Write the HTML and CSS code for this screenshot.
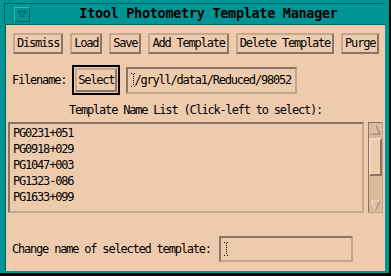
FILE: index.html
```html
<!DOCTYPE html>
<html>
<head>
<link rel="stylesheet" href="styles.css">
</head>
<body>

<div class="window">

<div class="titlebar">
  <div class="menu-btn">
    <svg width="10" height="8" viewBox="0 0 10 8"><path d="M1 1.5 H9 L5 7 Z" fill="none" stroke="#005a5a" stroke-width="1"/></svg>
  </div>
  <div class="title">Itool Photometry Template Manager</div>
</div>

<div class="client">

  <div class="toolbar">
    <div class="btn">Dismiss</div>
    <div class="btn">Load</div>
    <div class="btn">Save</div>
    <div class="btn">Add Template</div>
    <div class="btn">Delete Template</div>
    <div class="btn">Purge</div>
  </div>

  <div class="file-row">
    <span class="label">Filename:</span>
    <div class="default-ring"><div class="btn btn-tall">Select</div></div>
    <div class="field field-file"><svg class="ibeam" width="5" height="14" viewBox="0 0 5 14"><path d="M0 0.5 H2 M3 0.5 H5 M2.5 1 V13 M0 13.5 H2 M3 13.5 H5" stroke="#000" stroke-width="1" stroke-dasharray="1 1"/></svg><span>/gryll/data1/Reduced/98052</span></div>
  </div>

  <div class="list-label">Template Name List (Click-left to select):</div>

  <div class="list-row">
    <div class="list">
      <div class="item">PG0231+051</div>
      <div class="item">PG0918+029</div>
      <div class="item">PG1047+003</div>
      <div class="item">PG1323-086</div>
      <div class="item">PG1633+099</div>
    </div>
    <div class="scrollbar">
      <div class="arrow">
        <svg width="11" height="11" viewBox="0 0 11 11"><path d="M5.5 1 L10 10 H1 Z" fill="#e2bfa1" stroke="#8b7562"/><path d="M5.5 1 L1 10" fill="none" stroke="#f6dcc5"/></svg>
      </div>
      <div class="thumb"></div>
      <div class="track"></div>
      <div class="arrow">
        <svg width="11" height="11" viewBox="0 0 11 11"><path d="M5.5 10 L10 1 H1 Z" fill="#e2bfa1" stroke="#f6dcc5"/><path d="M10 1 L5.5 10" fill="none" stroke="#8b7562"/></svg>
      </div>
    </div>
  </div>

  <div class="rename-row">
    <span class="label">Change name of selected template:</span>
    <div class="field field-rename"><svg class="ibeam" width="5" height="14" viewBox="0 0 5 14"><path d="M0 0.5 H2 M3 0.5 H5 M2.5 1 V13 M0 13.5 H2 M3 13.5 H5" stroke="#000" stroke-width="1" stroke-dasharray="1 1"/></svg></div>
  </div>

</div>

</div>

</body>
</html>
```

FILE: styles.css
```css
body {
  margin: 0;
  background: #000000;
}

/* window frame */
.window {
  width: 389px;
  height: 273px;
  box-sizing: border-box;
  background: #009595;
  padding: 3px 4px 2px 4px;
  display: flex;
  flex-direction: column;
  font-family: "DejaVu Sans Mono", "Liberation Mono", monospace;
  font-size: 12px;
  letter-spacing: -1.2px;
  color: #000000;
}

.titlebar {
  height: 20px;
  border-top: 1px solid #005f5f;
  border-left: 1px solid #005f5f;
  display: flex;
  align-items: center;
  padding-left: 9px;
}

.menu-btn {
  width: 16px;
  height: 15px;
  box-sizing: border-box;
  border-top: 1px solid #3cb4b4;
  border-left: 1px solid #3cb4b4;
  border-right: 1px solid #005f5f;
  border-bottom: 1px solid #005f5f;
  display: flex;
  align-items: center;
  justify-content: center;
}

.title {
  flex: 1;
  text-align: center;
  font-weight: bold;
  font-size: 13.5px;
  letter-spacing: -0.3px;
  padding-left: 2px;
  line-height: 16px;
  margin-top: -2px;
}

.client {
  flex: 1;
  margin-left: 1px;
  background: #eecbad;
  border-top: 1px solid #005f5f;
  border-left: 1px solid #005f5f;
  display: flex;
  flex-direction: column;
}

/* buttons */
.toolbar {
  display: flex;
  gap: 7px;
  margin-top: 8px;
  padding-left: 7px;
}

.btn {
  height: 21px;
  box-sizing: border-box;
  line-height: 17px;
  padding: 0 2px 0 2px;
  border: 2px solid;
  border-color: #c6a78d #8b7562 #8b7562 #c6a78d;
  white-space: nowrap;
}

.file-row {
  display: flex;
  align-items: center;
  margin-top: 11px;
  padding-left: 6px;
}

.label {
  white-space: nowrap;
}

.default-ring {
  margin-left: 6px;
  border: 2px solid #000000;
  padding: 1px;
}

.btn-tall {
  height: 24px;
  line-height: 20px;
  padding: 0 1px;
}

.field {
  box-sizing: border-box;
  border: 2px solid;
  border-color: #8b7562 #c6a78d #c6a78d #8b7562;
  display: flex;
  align-items: center;
  padding-left: 3px;
  white-space: nowrap;
}

.field-file {
  margin-left: 6px;
  width: 171px;
  height: 27px;
}

.ibeam {
  flex: none;
  margin-right: -2px;
}

.list-label {
  margin-top: 9px;
  line-height: 12px;
  text-align: center;
}

/* list with scrollbar */
.list-row {
  display: flex;
  margin-top: 6px;
  padding-left: 2px;
  height: 91px;
}

.list {
  width: 356px;
  box-sizing: border-box;
  border: 2px solid;
  border-color: #8b7562 #c6a78d #c6a78d #8b7562;
  padding: 1px 3px;
}

.item {
  line-height: 16px;
}

.scrollbar {
  margin-left: 4px;
  width: 15px;
  box-sizing: border-box;
  border: 1px solid;
  border-color: #8b7562 #c6a78d #c6a78d #8b7562;
  background: #dcb99b;
  display: flex;
  flex-direction: column;
  align-items: center;
}

.arrow {
  height: 13px;
  display: flex;
  align-items: center;
  justify-content: center;
}

.thumb {
  margin-top: 2px;
  width: 13px;
  height: 38px;
  box-sizing: border-box;
  background: #eecbad;
  border: 2px solid;
  border-color: #f3d6bd #8b7562 #8b7562 #f3d6bd;
}

.track {
  flex: 1;
}

.rename-row {
  display: flex;
  align-items: center;
  margin-top: 23px;
  padding-left: 6px;
}

.field-rename {
  margin-left: 8px;
  width: 134px;
  height: 26px;
}
```
